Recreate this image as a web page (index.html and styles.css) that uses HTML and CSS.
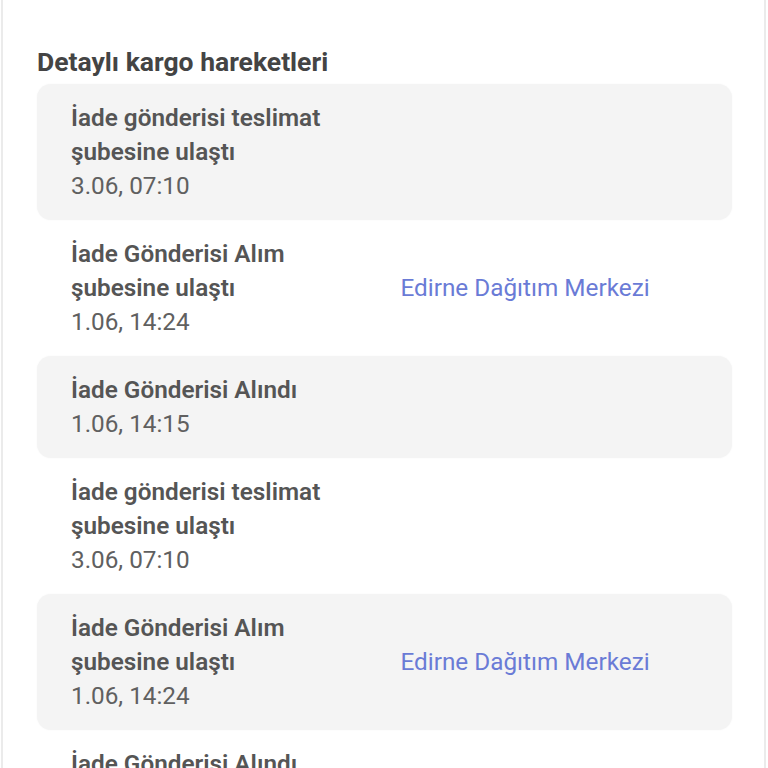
FILE: index.html
```html
<!DOCTYPE html>
<html lang="tr">
  <head>
    <meta charset="UTF-8" />
    <meta name="viewport" content="width=device-width, initial-scale=1.0" />
    <title>Detaylı kargo hareketleri</title>
    <link rel="stylesheet" href="styles.css">
  </head>
  <body>
    <div class="panel">
      <h2 class="section-title">Detaylı kargo hareketleri</h2>

      <div class="moves">
        <div class="move shaded">
          <div class="move-info">
            <div class="move-title">İade gönderisi teslimat şubesine ulaştı</div>
            <div class="move-date">3.06, 07:10</div>
          </div>
          <div class="move-place"></div>
        </div>

        <div class="move">
          <div class="move-info">
            <div class="move-title">İade Gönderisi Alım şubesine ulaştı</div>
            <div class="move-date">1.06, 14:24</div>
          </div>
          <div class="move-place">Edirne Dağıtım Merkezi</div>
        </div>

        <div class="move shaded">
          <div class="move-info">
            <div class="move-title">İade Gönderisi Alındı</div>
            <div class="move-date">1.06, 14:15</div>
          </div>
          <div class="move-place"></div>
        </div>

        <div class="move">
          <div class="move-info">
            <div class="move-title">İade gönderisi teslimat şubesine ulaştı</div>
            <div class="move-date">3.06, 07:10</div>
          </div>
          <div class="move-place"></div>
        </div>

        <div class="move shaded">
          <div class="move-info">
            <div class="move-title">İade Gönderisi Alım şubesine ulaştı</div>
            <div class="move-date">1.06, 14:24</div>
          </div>
          <div class="move-place">Edirne Dağıtım Merkezi</div>
        </div>

        <div class="move">
          <div class="move-info">
            <div class="move-title">İade Gönderisi Alındı</div>
            <div class="move-date">1.06, 14:15</div>
          </div>
          <div class="move-place"></div>
        </div>
      </div>
    </div>
  </body>
</html>
```

FILE: styles.css
```css
* {
  margin: 0;
  padding: 0;
  box-sizing: border-box;
}

body {
  font-family: Roboto, "Noto Sans", sans-serif;
  background: #ffffff;
  color: #555;
  overflow: hidden;
}

.panel {
  margin: 0 2px 0 1px;
  min-height: 100vh;
  border-left: 2px solid #ebebeb;
  border-right: 2px solid #ebebeb;
  padding: 46px 32px 0 34px;
}

.section-title {
  font-size: 26.5px;
  font-weight: 700;
  color: #444;
  line-height: 32px;
  margin-bottom: 6px;
}

.move {
  display: grid;
  grid-template-columns: 1fr 1fr;
  column-gap: 32px;
  align-items: center;
  padding: 17px 34px;
  border-radius: 14px;
}

.move.shaded {
  background: #f4f4f4;
  box-shadow: 0 0 2px rgba(0, 0, 0, 0.04);
}

.move-title {
  font-size: 24.3px;
  font-weight: 600;
  line-height: 34px;
  color: #555;
}

.move-date {
  font-size: 24.3px;
  line-height: 34px;
  color: #606060;
}

.move-place {
  font-size: 24.3px;
  line-height: 34px;
  color: #6a7bd6;
}
```
